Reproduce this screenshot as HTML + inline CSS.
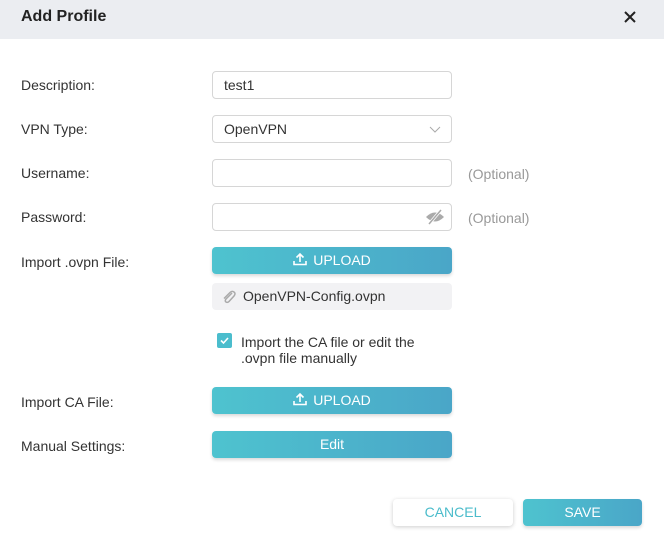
<!DOCTYPE html><html><head><style>
body{margin:0;width:664px;height:538px;background:#fff;font-family:"Liberation Sans",sans-serif;position:relative;overflow:hidden;color:#333}
.hd{position:absolute;left:0;top:0;width:664px;height:39px;background:#ebedf1}
.hd b{position:absolute;left:21px;top:8px;font-size:16px;color:#222}
.x{position:absolute;left:622px;top:9px}
.l{position:absolute;left:21px;font-size:14px;color:#333}
.in{position:absolute;left:212px;width:238px;height:26px;border:1px solid #d6d6d6;border-radius:4px;font-size:14px;line-height:26px;box-sizing:content-box}
.in span{margin-left:11px}
.opt{position:absolute;left:468px;font-size:14px;color:#999}
.btn{position:absolute;left:212px;width:240px;height:27px;border-radius:4px;background:linear-gradient(90deg,#4ec3cf,#4aa6c8);color:#fff;font-size:14px;text-align:center;line-height:27px;box-shadow:0 2px 3px rgba(0,0,0,.15)}
</style></head><body>
<div class="hd"><b>Add Profile</b>
<svg class="x" width="16" height="16" viewBox="0 0 16 16"><path d="M3 3L13 13M13 3L3 13" stroke="#222" stroke-width="2"/></svg></div>
<div class="l" style="top:77px">Description:</div>
<div class="in" style="top:71px"><span>test1</span></div>
<div class="l" style="top:121px">VPN Type:</div>
<div class="in" style="top:115px"><span>OpenVPN</span><svg style="position:absolute;right:10px;top:10px" width="12" height="8" viewBox="0 0 12 8"><path d="M1 1L6 6L11 1" stroke="#aaa" fill="none"/></svg></div>
<div class="l" style="top:165px">Username:</div>
<div class="in" style="top:159px"></div>
<div class="opt" style="top:166px">(Optional)</div>
<div class="l" style="top:209px">Password:</div>
<div class="in" style="top:203px"><svg style="position:absolute;right:6px;top:5px" width="20" height="16" viewBox="0 0 20 16"><path d="M1 8Q10 -1 19 8Q10 17 1 8Z" fill="#aaa"/><path d="M4 15L16 1" stroke="#fff" stroke-width="3"/><path d="M4 15L16 1" stroke="#aaa" stroke-width="1.5"/></svg></div>
<div class="opt" style="top:210px">(Optional)</div>
<div class="l" style="top:254px">Import .ovpn File:</div>
<div class="btn" style="top:247px"><svg width="14" height="14" viewBox="0 0 14 14" style="vertical-align:-1px;margin-right:6px"><path d="M7 10V2M3.5 5.5L7 2L10.5 5.5M1 9V12.5H13V9" stroke="#fff" stroke-width="1.6" fill="none"/></svg>UPLOAD</div>
<div style="position:absolute;left:212px;top:283px;width:240px;height:27px;background:#f2f2f4;border-radius:4px;font-size:14px;line-height:27px"><svg width="16" height="16" viewBox="0 0 16 16" style="position:absolute;left:9px;top:6px"><path d="M11 4L5 10Q3.5 12 5 13Q6.5 14 8 12.5L13 7Q15 4.5 13 3Q11 1.5 9 3.5L3 9.5" stroke="#aaa" stroke-width="1.5" fill="none"/></svg><span style="position:absolute;left:31px">OpenVPN-Config.ovpn</span></div>
<div style="position:absolute;left:217px;top:333px;width:15px;height:15px;background:#4bbdcd;border-radius:2px"><svg width="15" height="15" viewBox="0 0 15 15"><path d="M4 7.5L6.5 10L11 5" stroke="#fff" stroke-width="1.6" fill="none"/></svg></div>
<div style="position:absolute;left:241px;top:334px;font-size:14px;line-height:16px">Import the CA file or edit the<br>.ovpn file manually</div>
<div class="l" style="top:394px">Import CA File:</div>
<div class="btn" style="top:387px"><svg width="14" height="14" viewBox="0 0 14 14" style="vertical-align:-1px;margin-right:6px"><path d="M7 10V2M3.5 5.5L7 2L10.5 5.5M1 9V12.5H13V9" stroke="#fff" stroke-width="1.6" fill="none"/></svg>UPLOAD</div>
<div class="l" style="top:438px">Manual Settings:</div>
<div class="btn" style="top:431px">Edit</div>
<div style="position:absolute;left:393px;top:499px;width:120px;height:27px;border-radius:4px;background:#fff;box-shadow:0 1px 4px rgba(0,0,0,.2);color:#4bbccb;font-size:14px;text-align:center;line-height:27px">CANCEL</div>
<div class="btn" style="left:523px;top:499px;width:119px">SAVE</div>
</body></html>
